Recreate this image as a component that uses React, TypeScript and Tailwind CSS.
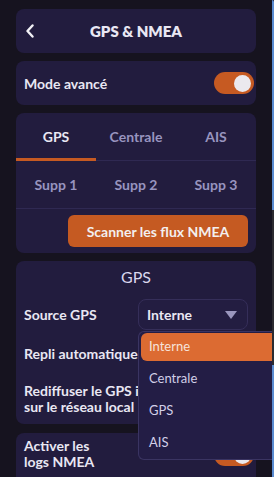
import { useState } from 'react'

function Toggle({ on = true }: { on?: boolean }) {
  return (
    <div className={`flex h-[22px] w-10 shrink-0 items-center rounded-full px-[3px] ${on ? 'justify-end bg-[#c65a22]' : 'justify-start bg-[#3a345c]'}`}>
      <div className="size-[17px] rounded-full bg-[#ebe9ee]" />
    </div>
  )
}

const tabsTop = ['GPS', 'Centrale', 'AIS']
const tabsBottom = ['Supp 1', 'Supp 2', 'Supp 3']
const sources = ['Interne', 'Centrale', 'GPS', 'AIS']

export default function App() {
  const [tab, setTab] = useState('GPS')
  const [source, setSource] = useState('Interne')

  return (
    <div className="relative h-[477px] w-[274px] overflow-hidden bg-[#16131f] font-['Lato',sans-serif] text-[#e9e7f3]">
      <div className="flex flex-col gap-2 pl-4 pr-[18px] pt-[9px]">
        <div className="flex h-11 items-center rounded-lg bg-[#221c3e] px-[9px]">
          <svg width="10" height="14" viewBox="0 0 10 14" className="shrink-0">
            <path d="M7.5 1.5 L2.5 7 L7.5 12.5" fill="none" stroke="#f2f1f6" strokeWidth="2.4" strokeLinecap="round" strokeLinejoin="round" />
          </svg>
          <div className="flex-1 pr-[10px] text-center text-[15px] font-extrabold">GPS &amp; NMEA</div>
        </div>

        <div className="flex h-11 items-center justify-between rounded-lg bg-[#221c3e] pl-2 pr-[2px]">
          <span className="text-[14px] font-bold">Mode avancé</span>
          <Toggle />
        </div>

        <div className="flex flex-col rounded-lg bg-[#221c3e]">
          <div className="grid h-[48px] grid-cols-3 border-b border-[#2f2952]">
            {tabsTop.map((t) => (
              <button key={t} type="button" onClick={() => setTab(t)} className={`relative text-[14px] font-bold ${tab === t ? 'text-[#e9e7f3]' : 'text-[#9894bf]'}`}>
                {t}
                {tab === t && <span className="absolute inset-x-0 -bottom-px h-[3px] bg-[#c65a22]" />}
              </button>
            ))}
          </div>
          <div className="grid h-[48px] grid-cols-3 border-b border-[#2f2952]">
            {tabsBottom.map((t) => (
              <button key={t} type="button" onClick={() => setTab(t)} className={`relative text-[14px] font-bold ${tab === t ? 'text-[#e9e7f3]' : 'text-[#9894bf]'}`}>
                {t}
              </button>
            ))}
          </div>
          <div className="flex justify-end px-2 pb-[6px] pt-[6px]">
            <button type="button" className="h-8 w-[180px] rounded-md bg-[#c55a22] text-[14px] font-bold text-[#f3efee]">Scanner les flux NMEA</button>
          </div>
        </div>

        <div className="flex h-[163px] flex-col rounded-lg bg-[#221c3e] px-2">
          <div className="pt-[6px] text-center text-[16px] font-normal leading-5 text-[#d9d7ee]">GPS</div>
          <div className="mt-3 flex items-center justify-between">
            <span className="text-[14px] font-bold">Source GPS</span>
            <div className="flex h-[31px] w-[110px] items-center justify-between rounded-lg border border-[#352e59] bg-[#231d41] pl-2 pr-[10px]">
              <span className="text-[14px] font-bold">{source}</span>
              <svg width="12" height="8" viewBox="0 0 12 8">
                <path d="M0 0 H12 L6 8 Z" fill="#9a96bd" />
              </svg>
            </div>
          </div>
          <div className="mt-[9px] flex h-[28px] items-center justify-between">
            <span className="text-[14px] font-bold">Repli automatique</span>
            <Toggle on={false} />
          </div>
          <div className="mt-[16px] flex items-center justify-between">
            <span className="w-[170px] text-[14px] font-bold leading-4">Rediffuser le GPS interne sur le réseau local</span>
            <Toggle on={false} />
          </div>
        </div>

        <div className="mt-px flex h-[60px] items-start justify-between rounded-lg bg-[#221c3e] pl-2 pr-[2px] pt-[5px]">
          <span className="w-[90px] text-[14px] font-bold leading-4">Activer les logs NMEA</span>
          <div className="mt-[6px]"><Toggle /></div>
        </div>
      </div>

      <div className="absolute left-[138px] top-[331px] flex w-[134px] flex-col gap-1 rounded-l-md border border-r-0 border-[#3a3462] bg-[#231d45] pb-[2px] pl-[2px] pt-px">
        {sources.map((s) => (
          <button key={s} type="button" onClick={() => setSource(s)} className={`flex h-7 items-center rounded-l-md pl-2 text-left text-[13px] font-normal ${source === s ? 'bg-[#dc6b32] text-[#f6e3da]' : 'text-[#d2cfe8]'}`}>
            {s}
          </button>
        ))}
      </div>

      <div className="absolute inset-y-0 right-0 flex w-[2px] flex-col">
        <div className="h-[210px] rounded-tr-md bg-[#5a8cd2]" />
        <div className="h-[155px] bg-[#2b2a30]" />
        <div className="flex-1 bg-[#5a8cd2]" />
      </div>
    </div>
  )
}
